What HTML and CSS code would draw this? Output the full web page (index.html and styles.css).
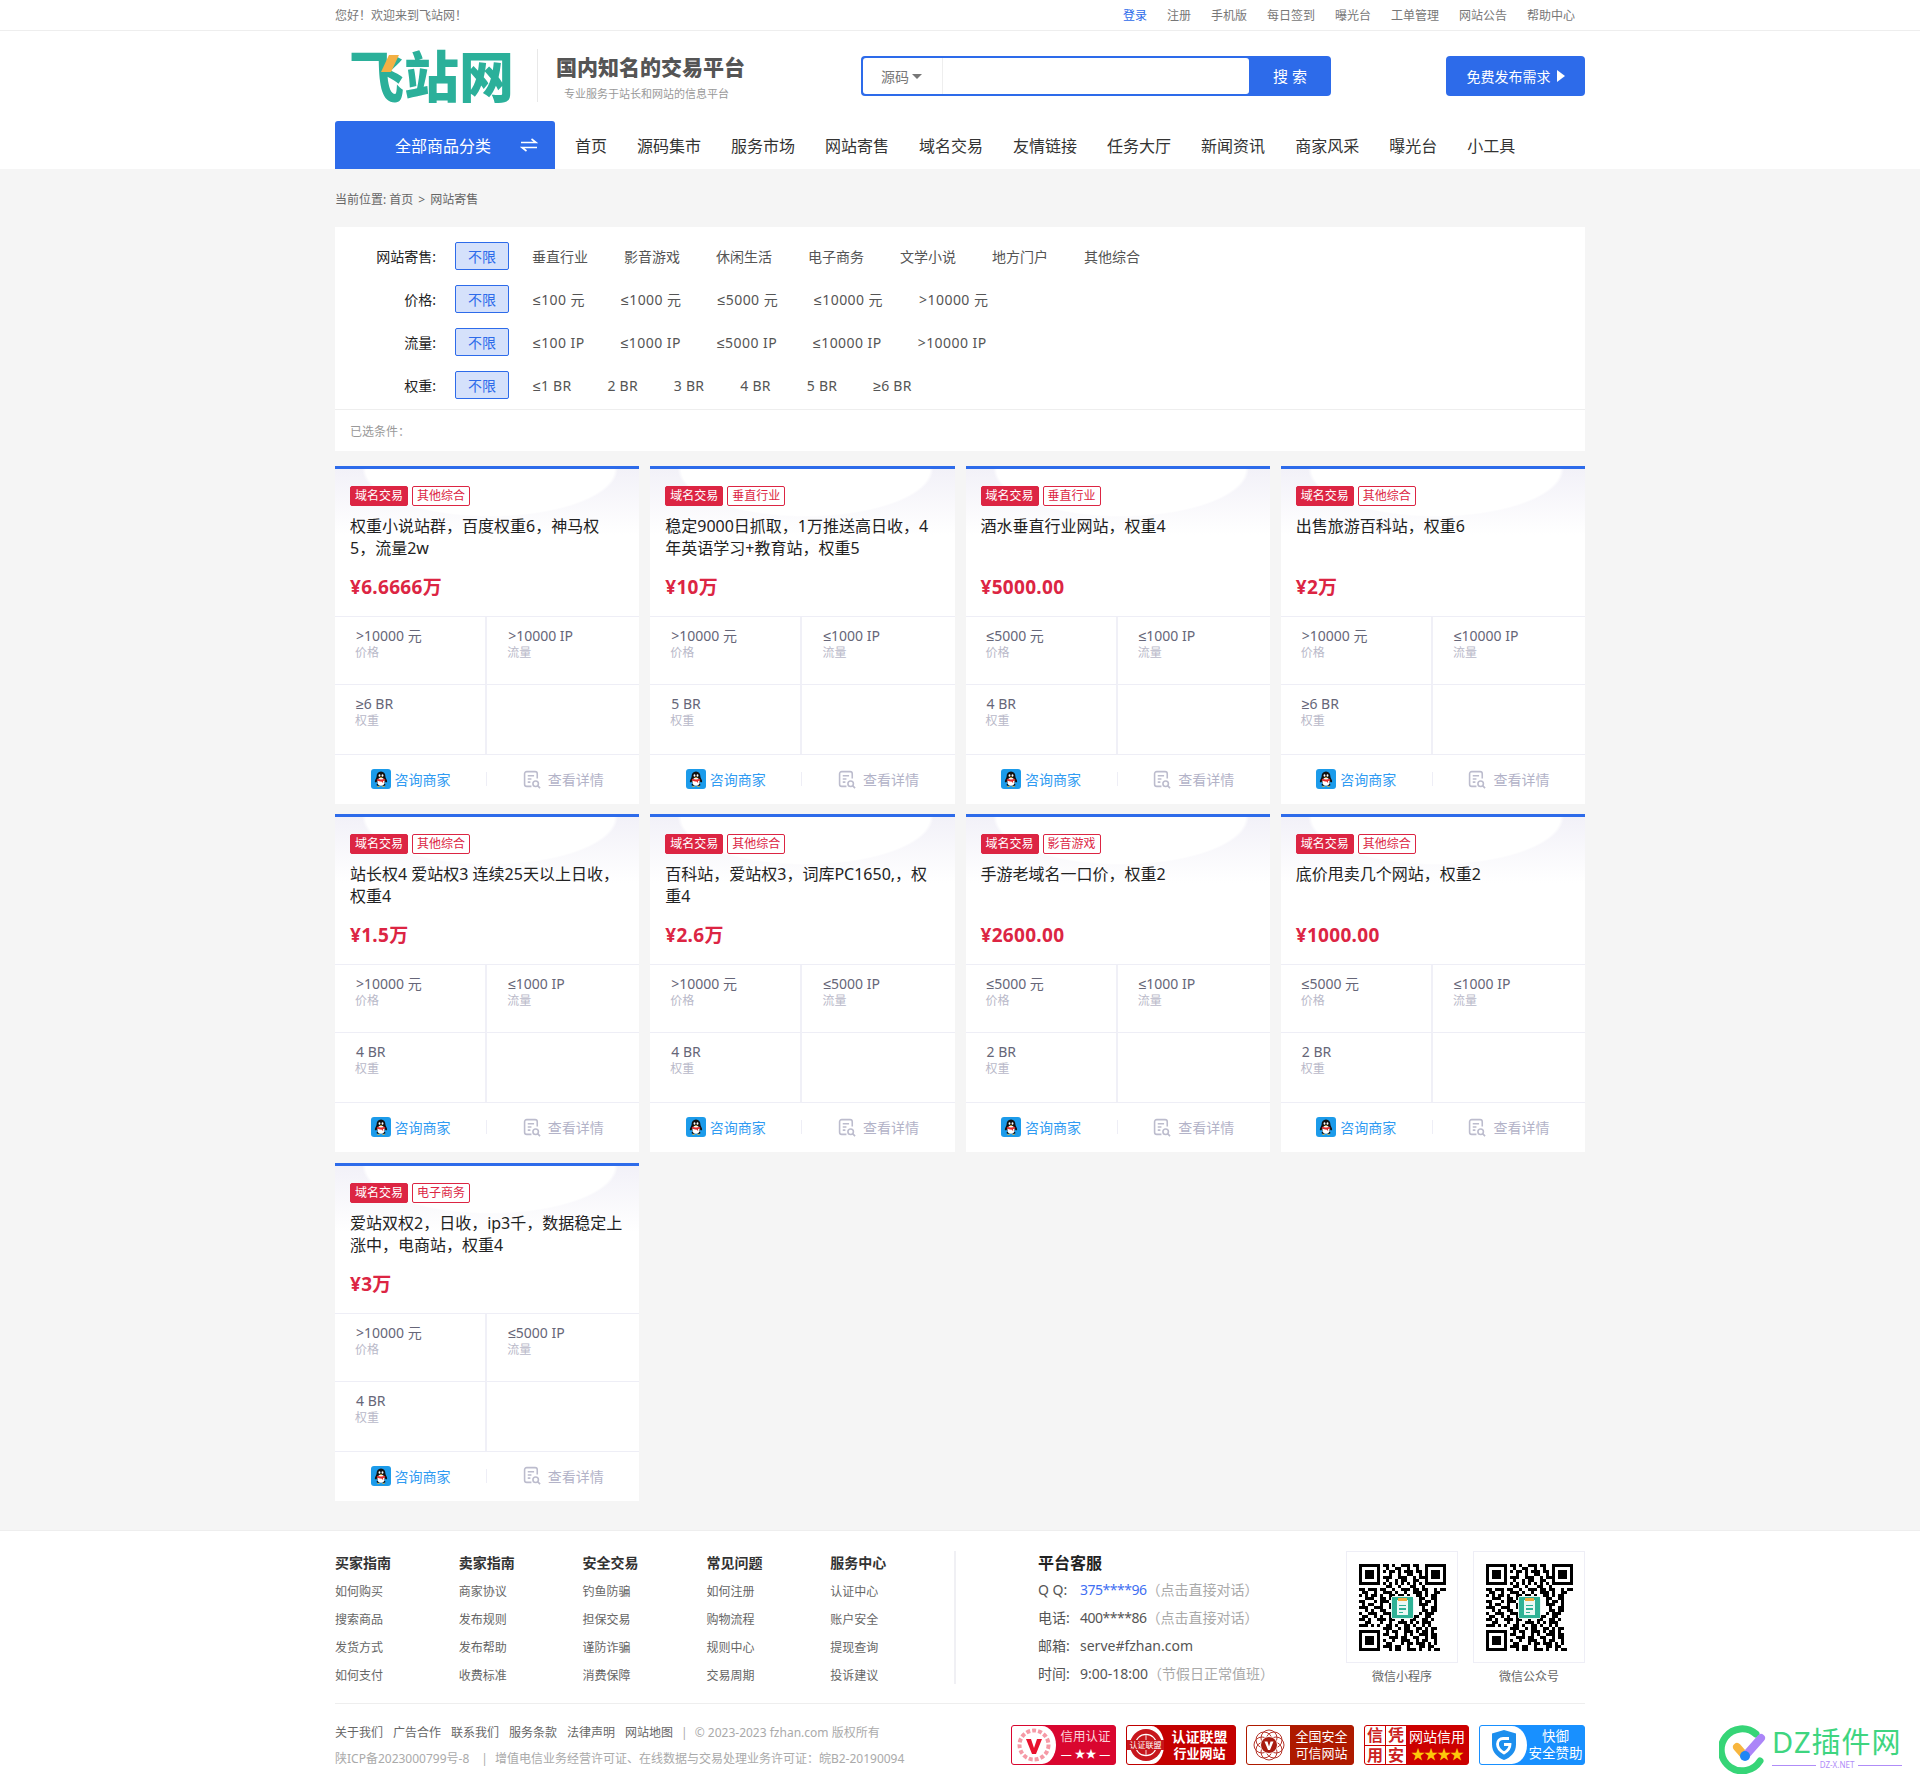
FILE: index.html
```html
<!DOCTYPE html>
<html lang="zh-CN">

<head>
    <meta charset="UTF-8">
    <title>网站寄售 - 飞站网</title>
    <link rel="stylesheet" href="styles.css">
</head>

<body>
    <!-- 公用图标 -->
    <svg class="defs" width="0" height="0">
        <symbol id="qq" viewBox="0 0 20 20">
            <rect width="20" height="20" rx="3" fill="#1c9bea" />
            <path d="M10 2.5c-3 0-4.4 2.2-4.4 4.8 0 1-.3 1.500-.9 2.600-.8 1.500-1.100 3-.5 3.400.4.200.9-.3 1.200-.9.300 1 .8 1.800 1.500 2.400-.9.300-1.500.8-1.400 1.300.1.600 1.200.8 2.400.7.900-.1 1.500-.3 2.100-.3s1.200.2 2.100.3c1.200.1 2.300-.1 2.400-.7.100-.5-.5-1-1.400-1.300.7-.6 1.200-1.400 1.500-2.400.3.600.8 1.100 1.200.9.600-.4.300-1.900-.5-3.400-.6-1.100-.9-1.600-.9-2.600 0-2.600-1.400-4.800-4.400-4.800z" fill="#111" />
            <ellipse cx="10" cy="12.800" rx="3.600" ry="4" fill="#fff" />
            <path d="M6 9.800c2.500 1 5.500 1 8 0l.3 1.400c-.8.500-1.500.7-2.300.8l.2 2-1.800-1.600c-1.600 0-3.200-.3-4.600-1.200z" fill="#e02a2a" />
            <ellipse cx="8.500" cy="6.500" rx=".9" ry="1.200" fill="#fff" />
            <ellipse cx="11.500" cy="6.500" rx=".9" ry="1.200" fill="#fff" />
            <path d="M8.300 8.300h3.400l-1.700 1z" fill="#f5b21a" />
            <path d="M6 17.400c1-.6 2-.6 3 0-.8.600-2.200.6-3 0zM11 17.400c1-.6 2-.6 3 0-.8.600-2.200.6-3 0z" fill="#f5b21a" />
        </symbol>
        <symbol id="doc" viewBox="0 0 18 18">
            <path d="M8 15.500H3.500a2 2 0 0 1-2-2v-10a2 2 0 0 1 2-2h8a2 2 0 0 1 2 2v4.500M4.500 5.500h6M4.500 8.500h3.500M4.500 11.500h2.500" fill="none" stroke="#bcbccd" stroke-width="1.500" />
            <circle cx="12" cy="13" r="2.600" fill="none" stroke="#bcbccd" stroke-width="1.500" />
            <path d="M14 15l2.200 2.200" stroke="#bcbccd" stroke-width="1.500" />
        </symbol>
        <symbol id="qr" viewBox="0 0 29 29">
            <path fill-rule="evenodd" d="M0 0h7v7H0zM1 1v5h5V1zM2 2h3v3H2zM22 0h7v7h-7zM23 1v5h5V1zM24 2h3v3h-3zM0 22h7v7H0zM1 23v5h5v-5zM2 24h3v3H2z" />
            <path fill="none" stroke="#000" stroke-width="1" d="M8 .5h2m1 0h1m2 0h3m1 0h2M9 1.500h1m2 0h2m2 0h1m2 0h1M8 2.500h1m1 0h2m1 0h1m1 0h3m1 0h2M10 3.500h1m2 0h1m2 0h2m2 0h1M8 4.500h3m2 0h3m2 0h1m1 0h2M9 5.500h1m2 0h1m1 0h2m2 0h2M8 6.500h1m1 0h1m1 0h1m1 0h1m1 0h1m1 0h1m1 0h1M9 7.500h2m2 0h1m3 0h2m2 0h1M0 8.500h2m1 0h3m1 0h2m2 0h1m2 0h3m1 0h2m1 0h2m2 0h1m1 0h2M1 9.500h2m2 0h1m2 0h3m1 0h1m2 0h1m2 0h3m1 0h1m2 0h2M0 10.500h1m1 0h1m1 0h2m1 0h1m2 0h2m1 0h2m1 0h1m2 0h2m1 0h1m1 0h2M2 11.500h3m2 0h2m1 0h1m9 0h2m2 0h2M0 12.500h2m3 0h1m1 0h3m10 0h1m1 0h2m1 0h1M1 13.500h1m1 0h2m2 0h1m2 0h1m9 0h3m2 0h1M0 14.500h3m2 0h3m2 0h1m10 0h1m2 0h2M2 15.500h1m1 0h1m2 0h2m12 0h2m1 0h2M0 16.500h1m2 0h3m2 0h3m9 0h1m1 0h3M1 17.500h2m2 0h1m1 0h1m2 0h1m1 0h1m1 0h2m1 0h3m2 0h2M0 18.500h2m1 0h1m2 0h3m1 0h2m2 0h1m2 0h2m2 0h2m1 0h1M2 19.500h2m3 0h1m2 0h1m2 0h3m1 0h1m1 0h1m1 0h3M0 20.500h3m1 0h1m1 0h1m2 0h2m1 0h1m2 0h2m1 0h1m2 0h1m1 0h1M8 21.500h3m2 0h1m1 0h2m2 0h2m1 0h1m1 0h2M9 22.500h1m1 0h2m2 0h3m1 0h1m1 0h2m1 0h1M8 23.500h2m2 0h1m2 0h1m1 0h1m2 0h3m1 0h2M10 24.500h3m1 0h2m2 0h2m2 0h1m1 0h2M8 25.500h1m2 0h1m2 0h3m2 0h1m1 0h2m2 0h1M9 26.500h2m3 0h1m1 0h2m1 0h3m1 0h1m1 0h1M8 27.500h3m1 0h2m2 0h1m3 0h2m1 0h2M10 28.500h1m1 0h2m2 0h3m1 0h1m2 0h1m1 0h2" />
            <rect x="10.800" y="10.800" width="7.400" height="7.400" rx=".8" fill="#2fb296" stroke="#fff" stroke-width=".3" />
            <rect x="12.600" y="12" width="3.800" height="5" rx=".5" fill="#e9f8f4" />
            <rect x="13" y="11.400" width="3" height=".8" fill="#f0a93c" />
            <path d="M13.200 13.800h2.600M13.200 15h2.600M13.200 16.100h1.500" stroke="#2fb296" stroke-width=".4" />
        </symbol>
    </svg>

    <div class="topbar">
        <div class="wrap topbar-in">
            <span>您好！欢迎来到飞站网！</span>
            <div class="toplinks">
                <a href="javascript:;" class="login">登录</a>
                <a href="javascript:;">注册</a>
                <a href="javascript:;">手机版</a>
                <a href="javascript:;">每日签到</a>
                <a href="javascript:;">曝光台</a>
                <a href="javascript:;">工单管理</a>
                <a href="javascript:;">网站公告</a>
                <a href="javascript:;">帮助中心</a>
            </div>
        </div>
    </div>

    <div class="header">
        <div class="wrap head-row">
            <a href="javascript:;" class="logo">飞站网<i class="logo-mark"></i></a>
            <div class="slogan">
                <strong>国内知名的交易平台</strong>
                <span>专业服务于站长和网站的信息平台</span>
            </div>
            <div class="search">
                <div class="search-type">源码<i class="caret"></i></div>
                <div class="search-input"></div>
                <a href="javascript:;" class="search-btn">搜 索</a>
            </div>
            <a href="javascript:;" class="publish">免费发布需求<i class="tri"></i></a>
        </div>
        <div class="wrap nav">
            <a href="javascript:;" class="all-cate">全部商品分类
                <svg width="18" height="14" viewBox="0 0 18 14">
                    <path d="M1 4.500h15L11.500 1M17 9.500H2L6.500 13" fill="none" stroke="#fff" stroke-width="1.600" />
                </svg>
            </a>
            <ul class="nav-list">
                <li>首页</li>
                <li>源码集市</li>
                <li>服务市场</li>
                <li>网站寄售</li>
                <li>域名交易</li>
                <li>友情链接</li>
                <li>任务大厅</li>
                <li>新闻资讯</li>
                <li>商家风采</li>
                <li>曝光台</li>
                <li>小工具</li>
            </ul>
        </div>
    </div>

    <div class="main">
        <div class="wrap">
            <div class="crumb">当前位置: 首页<i class="sep">&gt;</i>网站寄售</div>

            <div class="filter">
                <div class="filter-row">
                    <span class="filter-name">网站寄售:</span>
                    <a class="current">不限</a><a>垂直行业</a><a>影音游戏</a><a>休闲生活</a><a>电子商务</a><a>文学小说</a><a>地方门户</a><a>其他综合</a>
                </div>
                <div class="filter-row wide">
                    <span class="filter-name">价格:</span>
                    <a class="current">不限</a><a>≤100 元</a><a>≤1000 元</a><a>≤5000 元</a><a>≤10000 元</a><a>&gt;10000 元</a>
                </div>
                <div class="filter-row wide">
                    <span class="filter-name">流量:</span>
                    <a class="current">不限</a><a>≤100 IP</a><a>≤1000 IP</a><a>≤5000 IP</a><a>≤10000 IP</a><a>&gt;10000 IP</a>
                </div>
                <div class="filter-row br">
                    <span class="filter-name">权重:</span>
                    <a class="current">不限</a><a>≤1 BR</a><a>2 BR</a><a>3 BR</a><a>4 BR</a><a>5 BR</a><a>≥6 BR</a>
                </div>
                <div class="selected">已选条件：</div>
            </div>

            <div class="cards">
                <div class="card">
                    <div class="tags"><span class="tag-a">域名交易</span><span class="tag-b">其他综合</span></div>
                    <h3>权重小说站群，百度权重6，神马权5，流量2w</h3>
                    <div class="price">¥6.6666万</div>
                    <div class="attrs">
                        <div><b>&gt;10000 元</b><em>价格</em></div>
                        <div><b>&gt;10000 IP</b><em>流量</em></div>
                        <div><b>≥6 BR</b><em>权重</em></div>
                        <div></div>
                    </div>
                    <div class="card-foot">
                        <a class="ask"><svg width="20" height="20"><use href="#qq" /></svg>咨询商家</a>
                        <a class="more"><svg width="19" height="19"><use href="#doc" /></svg>查看详情</a>
                    </div>
                </div>
                <div class="card">
                    <div class="tags"><span class="tag-a">域名交易</span><span class="tag-b">垂直行业</span></div>
                    <h3>稳定9000日抓取，1万推送高日收，4年英语学习+教育站，权重5</h3>
                    <div class="price">¥10万</div>
                    <div class="attrs">
                        <div><b>&gt;10000 元</b><em>价格</em></div>
                        <div><b>≤1000 IP</b><em>流量</em></div>
                        <div><b>5 BR</b><em>权重</em></div>
                        <div></div>
                    </div>
                    <div class="card-foot">
                        <a class="ask"><svg width="20" height="20"><use href="#qq" /></svg>咨询商家</a>
                        <a class="more"><svg width="19" height="19"><use href="#doc" /></svg>查看详情</a>
                    </div>
                </div>
                <div class="card">
                    <div class="tags"><span class="tag-a">域名交易</span><span class="tag-b">垂直行业</span></div>
                    <h3>酒水垂直行业网站，权重4</h3>
                    <div class="price">¥5000.00</div>
                    <div class="attrs">
                        <div><b>≤5000 元</b><em>价格</em></div>
                        <div><b>≤1000 IP</b><em>流量</em></div>
                        <div><b>4 BR</b><em>权重</em></div>
                        <div></div>
                    </div>
                    <div class="card-foot">
                        <a class="ask"><svg width="20" height="20"><use href="#qq" /></svg>咨询商家</a>
                        <a class="more"><svg width="19" height="19"><use href="#doc" /></svg>查看详情</a>
                    </div>
                </div>
                <div class="card">
                    <div class="tags"><span class="tag-a">域名交易</span><span class="tag-b">其他综合</span></div>
                    <h3>出售旅游百科站，权重6</h3>
                    <div class="price">¥2万</div>
                    <div class="attrs">
                        <div><b>&gt;10000 元</b><em>价格</em></div>
                        <div><b>≤10000 IP</b><em>流量</em></div>
                        <div><b>≥6 BR</b><em>权重</em></div>
                        <div></div>
                    </div>
                    <div class="card-foot">
                        <a class="ask"><svg width="20" height="20"><use href="#qq" /></svg>咨询商家</a>
                        <a class="more"><svg width="19" height="19"><use href="#doc" /></svg>查看详情</a>
                    </div>
                </div>
                <div class="card">
                    <div class="tags"><span class="tag-a">域名交易</span><span class="tag-b">其他综合</span></div>
                    <h3>站长权4 爱站权3 连续25天以上日收，权重4</h3>
                    <div class="price">¥1.5万</div>
                    <div class="attrs">
                        <div><b>&gt;10000 元</b><em>价格</em></div>
                        <div><b>≤1000 IP</b><em>流量</em></div>
                        <div><b>4 BR</b><em>权重</em></div>
                        <div></div>
                    </div>
                    <div class="card-foot">
                        <a class="ask"><svg width="20" height="20"><use href="#qq" /></svg>咨询商家</a>
                        <a class="more"><svg width="19" height="19"><use href="#doc" /></svg>查看详情</a>
                    </div>
                </div>
                <div class="card">
                    <div class="tags"><span class="tag-a">域名交易</span><span class="tag-b">其他综合</span></div>
                    <h3>百科站，爱站权3，词库PC1650,，权重4</h3>
                    <div class="price">¥2.6万</div>
                    <div class="attrs">
                        <div><b>&gt;10000 元</b><em>价格</em></div>
                        <div><b>≤5000 IP</b><em>流量</em></div>
                        <div><b>4 BR</b><em>权重</em></div>
                        <div></div>
                    </div>
                    <div class="card-foot">
                        <a class="ask"><svg width="20" height="20"><use href="#qq" /></svg>咨询商家</a>
                        <a class="more"><svg width="19" height="19"><use href="#doc" /></svg>查看详情</a>
                    </div>
                </div>
                <div class="card">
                    <div class="tags"><span class="tag-a">域名交易</span><span class="tag-b">影音游戏</span></div>
                    <h3>手游老域名一口价，权重2</h3>
                    <div class="price">¥2600.00</div>
                    <div class="attrs">
                        <div><b>≤5000 元</b><em>价格</em></div>
                        <div><b>≤1000 IP</b><em>流量</em></div>
                        <div><b>2 BR</b><em>权重</em></div>
                        <div></div>
                    </div>
                    <div class="card-foot">
                        <a class="ask"><svg width="20" height="20"><use href="#qq" /></svg>咨询商家</a>
                        <a class="more"><svg width="19" height="19"><use href="#doc" /></svg>查看详情</a>
                    </div>
                </div>
                <div class="card">
                    <div class="tags"><span class="tag-a">域名交易</span><span class="tag-b">其他综合</span></div>
                    <h3>底价甩卖几个网站，权重2</h3>
                    <div class="price">¥1000.00</div>
                    <div class="attrs">
                        <div><b>≤5000 元</b><em>价格</em></div>
                        <div><b>≤1000 IP</b><em>流量</em></div>
                        <div><b>2 BR</b><em>权重</em></div>
                        <div></div>
                    </div>
                    <div class="card-foot">
                        <a class="ask"><svg width="20" height="20"><use href="#qq" /></svg>咨询商家</a>
                        <a class="more"><svg width="19" height="19"><use href="#doc" /></svg>查看详情</a>
                    </div>
                </div>
                <div class="card">
                    <div class="tags"><span class="tag-a">域名交易</span><span class="tag-b">电子商务</span></div>
                    <h3>爱站双权2，日收，ip3千，数据稳定上涨中，电商站，权重4</h3>
                    <div class="price">¥3万</div>
                    <div class="attrs">
                        <div><b>&gt;10000 元</b><em>价格</em></div>
                        <div><b>≤5000 IP</b><em>流量</em></div>
                        <div><b>4 BR</b><em>权重</em></div>
                        <div></div>
                    </div>
                    <div class="card-foot">
                        <a class="ask"><svg width="20" height="20"><use href="#qq" /></svg>咨询商家</a>
                        <a class="more"><svg width="19" height="19"><use href="#doc" /></svg>查看详情</a>
                    </div>
                </div>
            </div>
        </div>
    </div>

    <div class="footer">
        <div class="wrap">
            <div class="foot-top">
                <div class="foot-links">
                    <dl>
                        <dt>买家指南</dt>
                        <dd>如何购买</dd>
                        <dd>搜索商品</dd>
                        <dd>发货方式</dd>
                        <dd>如何支付</dd>
                    </dl>
                    <dl>
                        <dt>卖家指南</dt>
                        <dd>商家协议</dd>
                        <dd>发布规则</dd>
                        <dd>发布帮助</dd>
                        <dd>收费标准</dd>
                    </dl>
                    <dl>
                        <dt>安全交易</dt>
                        <dd>钓鱼防骗</dd>
                        <dd>担保交易</dd>
                        <dd>谨防诈骗</dd>
                        <dd>消费保障</dd>
                    </dl>
                    <dl>
                        <dt>常见问题</dt>
                        <dd>如何注册</dd>
                        <dd>购物流程</dd>
                        <dd>规则中心</dd>
                        <dd>交易周期</dd>
                    </dl>
                    <dl>
                        <dt>服务中心</dt>
                        <dd>认证中心</dd>
                        <dd>账户安全</dd>
                        <dd>提现查询</dd>
                        <dd>投诉建议</dd>
                    </dl>
                </div>
                <div class="service">
                    <h4>平台客服</h4>
                    <p><i class="lab">Q Q:</i><a class="num blue">375****96</a><span>（点击直接对话）</span></p>
                    <p><i class="lab">电话:</i><a class="num">400****86</a><span>（点击直接对话）</span></p>
                    <p><i class="lab">邮箱:</i>serve#fzhan.com</p>
                    <p><i class="lab">时间:</i>9:00-18:00<span>（节假日正常值班）</span></p>
                </div>
                <div class="qrcode">
                    <div class="qr-box"><svg width="87" height="87" shape-rendering="crispEdges"><use href="#qr" /></svg></div>
                    <span>微信小程序</span>
                </div>
                <div class="qrcode">
                    <div class="qr-box"><svg width="87" height="87" shape-rendering="crispEdges"><use href="#qr" /></svg></div>
                    <span>微信公众号</span>
                </div>
            </div>
            <div class="foot-bottom">
                <div class="copy">
                    <p class="copy-links"><a>关于我们</a><a>广告合作</a><a>联系我们</a><a>服务条款</a><a>法律声明</a><a>网站地图</a><i>|</i><span>© 2023-2023 fzhan.com 版权所有</span></p>
                    <p class="copy-icp">陕ICP备2023000799号-8<i>|</i>增值电信业务经营许可证、在线数据与交易处理业务许可证：皖B2-20190094</p>
                </div>
                <div class="badges">
                    <div class="badge b1">
                        <div class="badge-mark">
                            <svg width="36" height="36" viewBox="0 0 36 36">
                                <circle cx="18" cy="18" r="14.500" fill="none" stroke="#f59aa6" stroke-width="4" stroke-dasharray="4 2" />
                                <path d="M10 12h5l3 9 3-9h5l-6 15h-4z" fill="#e8112d" />
                            </svg>
                        </div>
                        <div class="badge-txt"><span>信用认证</span><span class="b1-star">— ★★ —</span></div>
                    </div>
                    <div class="badge b2">
                        <div class="badge-mark">
                            <svg width="34" height="34" viewBox="0 0 32 32">
                                <circle cx="16" cy="16" r="15" fill="#c7161c" />
                                <circle cx="16" cy="16" r="10" fill="none" stroke="#fff" stroke-width="1" />
                                <path d="M6 16h20M16 6v20" stroke="#fff" stroke-width=".8" />
                            </svg>
                            <em>认证联盟</em>
                        </div>
                        <div class="badge-txt"><strong>认证联盟</strong><strong class="small">行业网站</strong></div>
                    </div>
                    <div class="badge b3">
                        <div class="badge-mark">
                            <svg width="34" height="34" viewBox="0 0 34 34">
                                <g fill="none" stroke="#b5352a" stroke-width="1">
                                    <circle cx="17" cy="10" r="8" />
                                    <circle cx="17" cy="24" r="8" />
                                    <circle cx="10" cy="17" r="8" />
                                    <circle cx="24" cy="17" r="8" />
                                    <circle cx="12" cy="12" r="8" />
                                    <circle cx="22" cy="22" r="8" />
                                    <circle cx="22" cy="12" r="8" />
                                    <circle cx="12" cy="22" r="8" />
                                </g>
                                <circle cx="17" cy="17" r="8.500" fill="#a81c10" stroke="#fff" stroke-width="1" />
                                <path d="M12.500 13.500h3l1.500 5 1.500-5h3l-3.500 8.500h-2z" fill="#fff" />
                            </svg>
                        </div>
                        <div class="badge-txt"><span>全国安全</span><span>可信网站</span></div>
                    </div>
                    <div class="badge b4">
                        <div class="badge-mark seal"><span>信</span><span>凭</span><span>用</span><span>安</span></div>
                        <div class="badge-txt"><span>网站信用</span><span class="b4-star">★★★★</span></div>
                    </div>
                    <div class="badge b5">
                        <div class="badge-mark">
                            <svg width="28" height="32" viewBox="0 0 28 32">
                                <path d="M14 1l12 3.500v11c0 8-5.500 13-12 15.500C7.500 28.500 2 23.500 2 15.500v-11z" fill="#1d8fee" />
                                <path d="M19 9.500l-6 0a5.500 5.500 0 0 0-5.500 5.500c0 4 3 7 6.500 9 3.500-2 6-5 6-8.500h-6" fill="none" stroke="#fff" stroke-width="2.800" />
                            </svg>
                        </div>
                        <div class="badge-txt"><span>快御</span><span>安全赞助</span></div>
                    </div>
                </div>
            </div>
        </div>
    </div>

    <!-- 右下角水印 -->
    <div class="watermark">
        <svg width="52" height="52" viewBox="0 0 52 52">
            <path d="M37 12A21 21 0 1 0 41 39" fill="none" stroke="#36d577" stroke-width="7" stroke-linecap="round" />
            <path d="M18 25l7 8" stroke="#f8b63e" stroke-width="8" stroke-linecap="round" />
            <path d="M27 33l15-17" stroke="#ab85f8" stroke-width="8" stroke-linecap="round" />
            <circle cx="26" cy="34" r="5" fill="#1f86f5" />
        </svg>
        <div class="wm-text">
            <strong>DZ插件网</strong>
            <span>DZ-X.NET</span>
        </div>
    </div>
</body>

</html>
```

FILE: styles.css
```css
* {
    margin: 0;
    padding: 0;
    box-sizing: border-box;
}

body {
    position: relative;
    height: 1788px;
    overflow: hidden;
    background-color: #f5f5f5;
    font-family: "Noto Sans", "Liberation Sans", "Noto Sans CJK SC", sans-serif;
    font-size: 12px;
    color: #666;
}

a {
    text-decoration: none;
    color: inherit;
}

li {
    list-style-type: none;
}

em,
i {
    font-style: normal;
}

.defs {
    position: absolute;
}

.wrap {
    width: 1250px;
    margin: 0 auto;
}

/* 顶部条 */
.topbar {
    height: 31px;
    background-color: #fff;
    border-bottom: 1px solid #eee;
    line-height: 32px;
    color: #777;
}

.topbar-in {
    display: flex;
    justify-content: space-between;
}

.toplinks {
    display: flex;
    gap: 20px;
    padding-right: 10px;
}

.login {
    color: #2d6bea;
}

/* 头部 */
.header {
    height: 138px;
    background-color: #fff;
}

.head-row {
    display: flex;
    align-items: flex-start;
    height: 90px;
}

.logo {
    position: relative;
    width: 203px;
    height: 53px;
    margin-top: 18px;
    padding-left: 14px;
    border-right: 1px solid #e8e8e8;
    font-size: 55px;
    line-height: 53px;
    font-weight: 900;
    color: #2bb09a;
}

.logo-mark {
    position: absolute;
    left: 50px;
    top: 6px;
    width: 10px;
    height: 17px;
    background-color: #f3b044;
    transform: skewX(-25deg);
}

.slogan {
    width: 323px;
    padding: 23px 0 0 18px;
}

.slogan strong {
    display: block;
    font-size: 21px;
    line-height: 26px;
    font-weight: 900;
    color: #555;
}

.slogan span {
    display: block;
    margin-top: 7px;
    padding-left: 8px;
    font-size: 11px;
    line-height: 14px;
    color: #999;
}

.search {
    display: flex;
    width: 470px;
    height: 40px;
    margin-top: 25px;
    border-radius: 4px;
    background-color: #2d6bea;
}

.search-type {
    display: flex;
    align-items: center;
    width: 80px;
    margin: 2px 0 2px 2px;
    padding-left: 18px;
    border-radius: 3px 0 0 3px;
    border-right: 1px solid #eee;
    background-color: #fff;
    font-size: 14px;
    color: #777;
}

.caret {
    width: 0;
    height: 0;
    margin-left: 3px;
    border: 5px solid transparent;
    border-top-color: #777;
    border-bottom-width: 0;
}

.search-input {
    width: 306px;
    margin: 2px 0;
    border-radius: 0 3px 3px 0;
    background-color: #fff;
}

.search-btn {
    flex: 1;
    text-align: center;
    line-height: 40px;
    font-size: 15px;
    color: #fff;
}

.publish {
    display: flex;
    align-items: center;
    justify-content: center;
    gap: 6px;
    width: 139px;
    height: 40px;
    margin: 25px 0 0 115px;
    border-radius: 4px;
    background-color: #2d6bea;
    font-size: 14px;
    color: #fff;
}

.tri {
    width: 0;
    height: 0;
    border: 6px solid transparent;
    border-left: 8px solid #fff;
    border-right-width: 0;
}

.nav {
    display: flex;
    height: 48px;
}

.all-cate {
    display: flex;
    align-items: center;
    justify-content: flex-end;
    gap: 29px;
    width: 220px;
    padding-right: 17px;
    border-radius: 3px 3px 0 0;
    background-color: #2d6bea;
    font-size: 16px;
    color: #fff;
}

.nav-list {
    display: flex;
    margin-left: 5px;
    line-height: 50px;
    font-size: 16px;
    color: #333;
}

.nav-list li {
    padding: 0 15px;
}

/* 面包屑 */
.crumb {
    height: 58px;
    padding-top: 22px;
    line-height: 18px;
    color: #666;
}

.sep {
    margin: 0 5px;
}

/* 筛选 */
.filter {
    height: 224px;
    padding-top: 15px;
    background-color: #fff;
}

.filter-row {
    display: flex;
    align-items: center;
    height: 28px;
    margin-bottom: 15px;
    font-size: 14px;
    color: #555;
}

.filter-name {
    width: 120px;
    padding-right: 19px;
    text-align: right;
    color: #222;
}

.filter-row a {
    height: 28px;
    margin-right: 10px;
    padding: 0 12px;
    border: 1px solid transparent;
    border-radius: 2px;
    line-height: 28px;
    white-space: nowrap;
}

.wide a {
    letter-spacing: .45px;
}

.br a {
    letter-spacing: .25px;
}

.filter-row a.current {
    border-color: #2d6bea;
    background-color: #d5e1fb;
    letter-spacing: 0;
    color: #2d6bea;
}

.wide a.current,
.br a.current {
    margin-right: 11px;
}

.selected {
    height: 42px;
    margin-top: -5px;
    padding-left: 15px;
    border-top: 1px solid #eee;
    line-height: 44px;
    color: #999;
}

/* 卡片 */
.cards {
    display: grid;
    grid-template-columns: repeat(4, 1fr);
    column-gap: 11px;
    row-gap: 10.250px;
    margin-top: 15px;
}

.card {
    height: 338px;
    border-top: 3px solid #2d6bea;
    background: radial-gradient(ellipse 128px 48px at 51% 0, #fff 97%, rgba(255, 255, 255, 0) 100%) no-repeat, linear-gradient(#f2f1f8, #fff 66px);
    background-color: #fff;
}

.tags {
    display: flex;
    gap: 4px;
    padding: 17px 0 0 15px;
}

.tags span {
    width: 58px;
    height: 20px;
    border: 1px solid #dc2543;
    border-radius: 2px;
    text-align: center;
    line-height: 18px;
    color: #dc2543;
}

.tags .tag-a {
    background-color: #dc2543;
    color: #fff;
}

.card h3 {
    height: 44px;
    margin-top: 9px;
    padding: 0 15px;
    font-size: 16px;
    line-height: 22px;
    font-weight: 400;
    color: #222;
}

.price {
    height: 26px;
    margin-top: 15px;
    padding-left: 15px;
    font-size: 19px;
    line-height: 26px;
    font-weight: 700;
    letter-spacing: .3px;
    color: #dc2543;
}

.attrs {
    display: grid;
    grid-template-columns: 1fr 1fr;
    grid-template-rows: 67px 70px;
    height: 139px;
    margin-top: 16px;
    border-top: 1px solid #eeeef6;
    border-bottom: 1px solid #eeeef6;
}

.attrs div {
    padding: 9px 0 0 20px;
}

.attrs div:nth-child(odd) {
    border-right: 2px solid #f0f0f7;
}

.attrs div:nth-child(n+3) {
    border-top: 1px solid #eeeef6;
}

.attrs b {
    display: block;
    padding-left: 1px;
    font-size: 14px;
    line-height: 20px;
    font-weight: 400;
    color: #666678;
}

.attrs em {
    display: block;
    line-height: 14px;
    color: #b9b9c9;
}

.card-foot {
    display: flex;
    align-items: center;
    height: 48px;
    font-size: 14px;
}

.card-foot a {
    display: flex;
    align-items: center;
    justify-content: center;
    gap: 4px;
    width: 50%;
}

.ask {
    height: 14px;
    border-right: 1px solid #eeeef6;
    color: #2f9bf2;
}

.more {
    color: #b3b3c8;
}

.card-foot .more {
    gap: 6px;
}

/* 底部 */
.footer {
    height: 258px;
    margin-top: 29.500px;
    border-top: 1px solid #eee;
    background-color: #fff;
}

.foot-top {
    display: flex;
    height: 173px;
    padding-top: 20px;
    border-bottom: 1px solid #eee;
}

.foot-links {
    display: flex;
    width: 621px;
    height: 133px;
    border-right: 2px solid #f0f0f4;
}

.foot-links dl {
    width: 124px;
}

.foot-links dt {
    height: 27px;
    font-size: 14px;
    line-height: 24px;
    font-weight: 700;
    color: #333;
}

.foot-links dd {
    line-height: 28px;
    color: #666;
}

.service {
    width: 390px;
    padding-left: 82px;
    font-size: 14px;
    color: #555;
}

.service h4 {
    height: 25px;
    font-size: 16px;
    line-height: 24px;
    font-weight: 700;
    color: #222;
}

.service p {
    line-height: 28px;
}

.service span {
    color: #aaa;
}

.lab {
    display: inline-block;
    width: 42px;
}

.num {
    letter-spacing: -.5px;
}

.blue {
    color: #3f6ff2;
}

.qrcode {
    width: 112px;
    margin-right: 15px;
    text-align: center;
}

.qrcode:last-child {
    margin-right: 0;
}

.qr-box {
    display: flex;
    align-items: center;
    justify-content: center;
    height: 112px;
    border: 1px solid #eeeef6;
}

.qrcode span {
    display: block;
    margin-top: 4px;
    line-height: 20px;
    color: #666;
}

.foot-bottom {
    display: flex;
    justify-content: space-between;
    padding-top: 16px;
}

.copy {
    line-height: 26px;
    color: #aaa;
}

.copy-links a {
    margin-right: 10px;
    color: #666;
}

.copy-links a:last-of-type {
    margin-right: 8px;
}

.copy i {
    margin: 0 7px 0 12px;
}

.copy-links i {
    margin: 0 7px 0 0;
}

/* 认证图标 */
.badges {
    display: flex;
    gap: 10px;
    margin-top: 5px;
}

.badge {
    display: flex;
    align-items: center;
    height: 40px;
    border: 1px solid;
    border-radius: 3px;
    overflow: hidden;
    color: #fff;
    font-size: 14px;
}

.badge-mark {
    position: relative;
    display: flex;
    align-items: center;
    justify-content: center;
    height: 100%;
    background-color: #fff;
    flex-shrink: 0;
}

.badge-txt {
    display: flex;
    flex: 1;
    flex-direction: column;
    align-items: center;
    line-height: 17px;
    white-space: nowrap;
}

.b1 {
    width: 105px;
    border-color: #d9062f;
    background-color: #d9062f;
}

.b1 .badge-mark {
    width: 44px;
    border-radius: 0 22px 22px 0 / 0 30px 30px 0;
}

.b1 .badge-txt {
    font-size: 12.500px;
    color: #fbd4da;
}

.b1 .b1-star {
    font-size: 11px;
    color: #fff;
}

.b2 {
    width: 110px;
    border-color: #c00000;
    background-color: #c40000;
}

.b2 .badge-mark {
    width: 37px;
    border-radius: 0 20px 20px 0 / 0 30px 30px 0;
}

.b2 em {
    position: absolute;
    left: 0;
    right: 0;
    top: 14px;
    background-color: #c7161c;
    text-align: center;
    font-size: 8px;
    line-height: 10px;
    white-space: nowrap;
    color: #fff;
}

.b2 strong {
    font-weight: 700;
}

.b2 .small {
    font-size: 13px;
}

.b3 {
    width: 108px;
    border-color: #ae1a00;
    background-color: #ae1a00;
}

.b3 .badge-mark {
    width: 43px;
}

.b3 .badge-txt {
    font-size: 13px;
}

.b4 {
    width: 105px;
    border-color: #cc0000;
    background-color: #cc0000;
}

.seal {
    display: grid;
    grid-template-columns: 1fr 1fr;
    width: 41px;
    gap: 1px;
    background-color: #cc0000;
}

.seal span {
    background-color: #fff;
    text-align: center;
    line-height: 19px;
    font-size: 16px;
    font-weight: 700;
    color: #cc2222;
}

.b4-star {
    letter-spacing: -1px;
    color: #fdc80b;
}

.b5 {
    width: 106px;
    border-color: #1890ff;
    background-color: #1890ff;
}

.b5 .badge-mark {
    width: 47px;
    border-radius: 0 24px 24px 0 / 0 30px 30px 0;
}

.b5 .badge-txt {
    font-size: 13.500px;
}

/* 水印 */
.watermark {
    position: absolute;
    left: 1719px;
    top: 1722px;
    display: flex;
    align-items: flex-start;
    gap: 1px;
}

.wm-text {
    width: 130px;
    padding-top: 2px;
}

.wm-text strong {
    display: block;
    font-size: 29px;
    line-height: 36px;
    font-weight: 400;
    letter-spacing: 1px;
    white-space: nowrap;
    color: #3ed580;
}

.wm-text span {
    display: flex;
    align-items: center;
    gap: 4px;
    font-size: 8px;
    line-height: 10px;
    color: #b08cf8;
    justify-content: center;
}

.wm-text span::before,
.wm-text span::after {
    content: "";
    flex: 1;
    height: 1px;
    background-color: #b08cf8;
}
```
